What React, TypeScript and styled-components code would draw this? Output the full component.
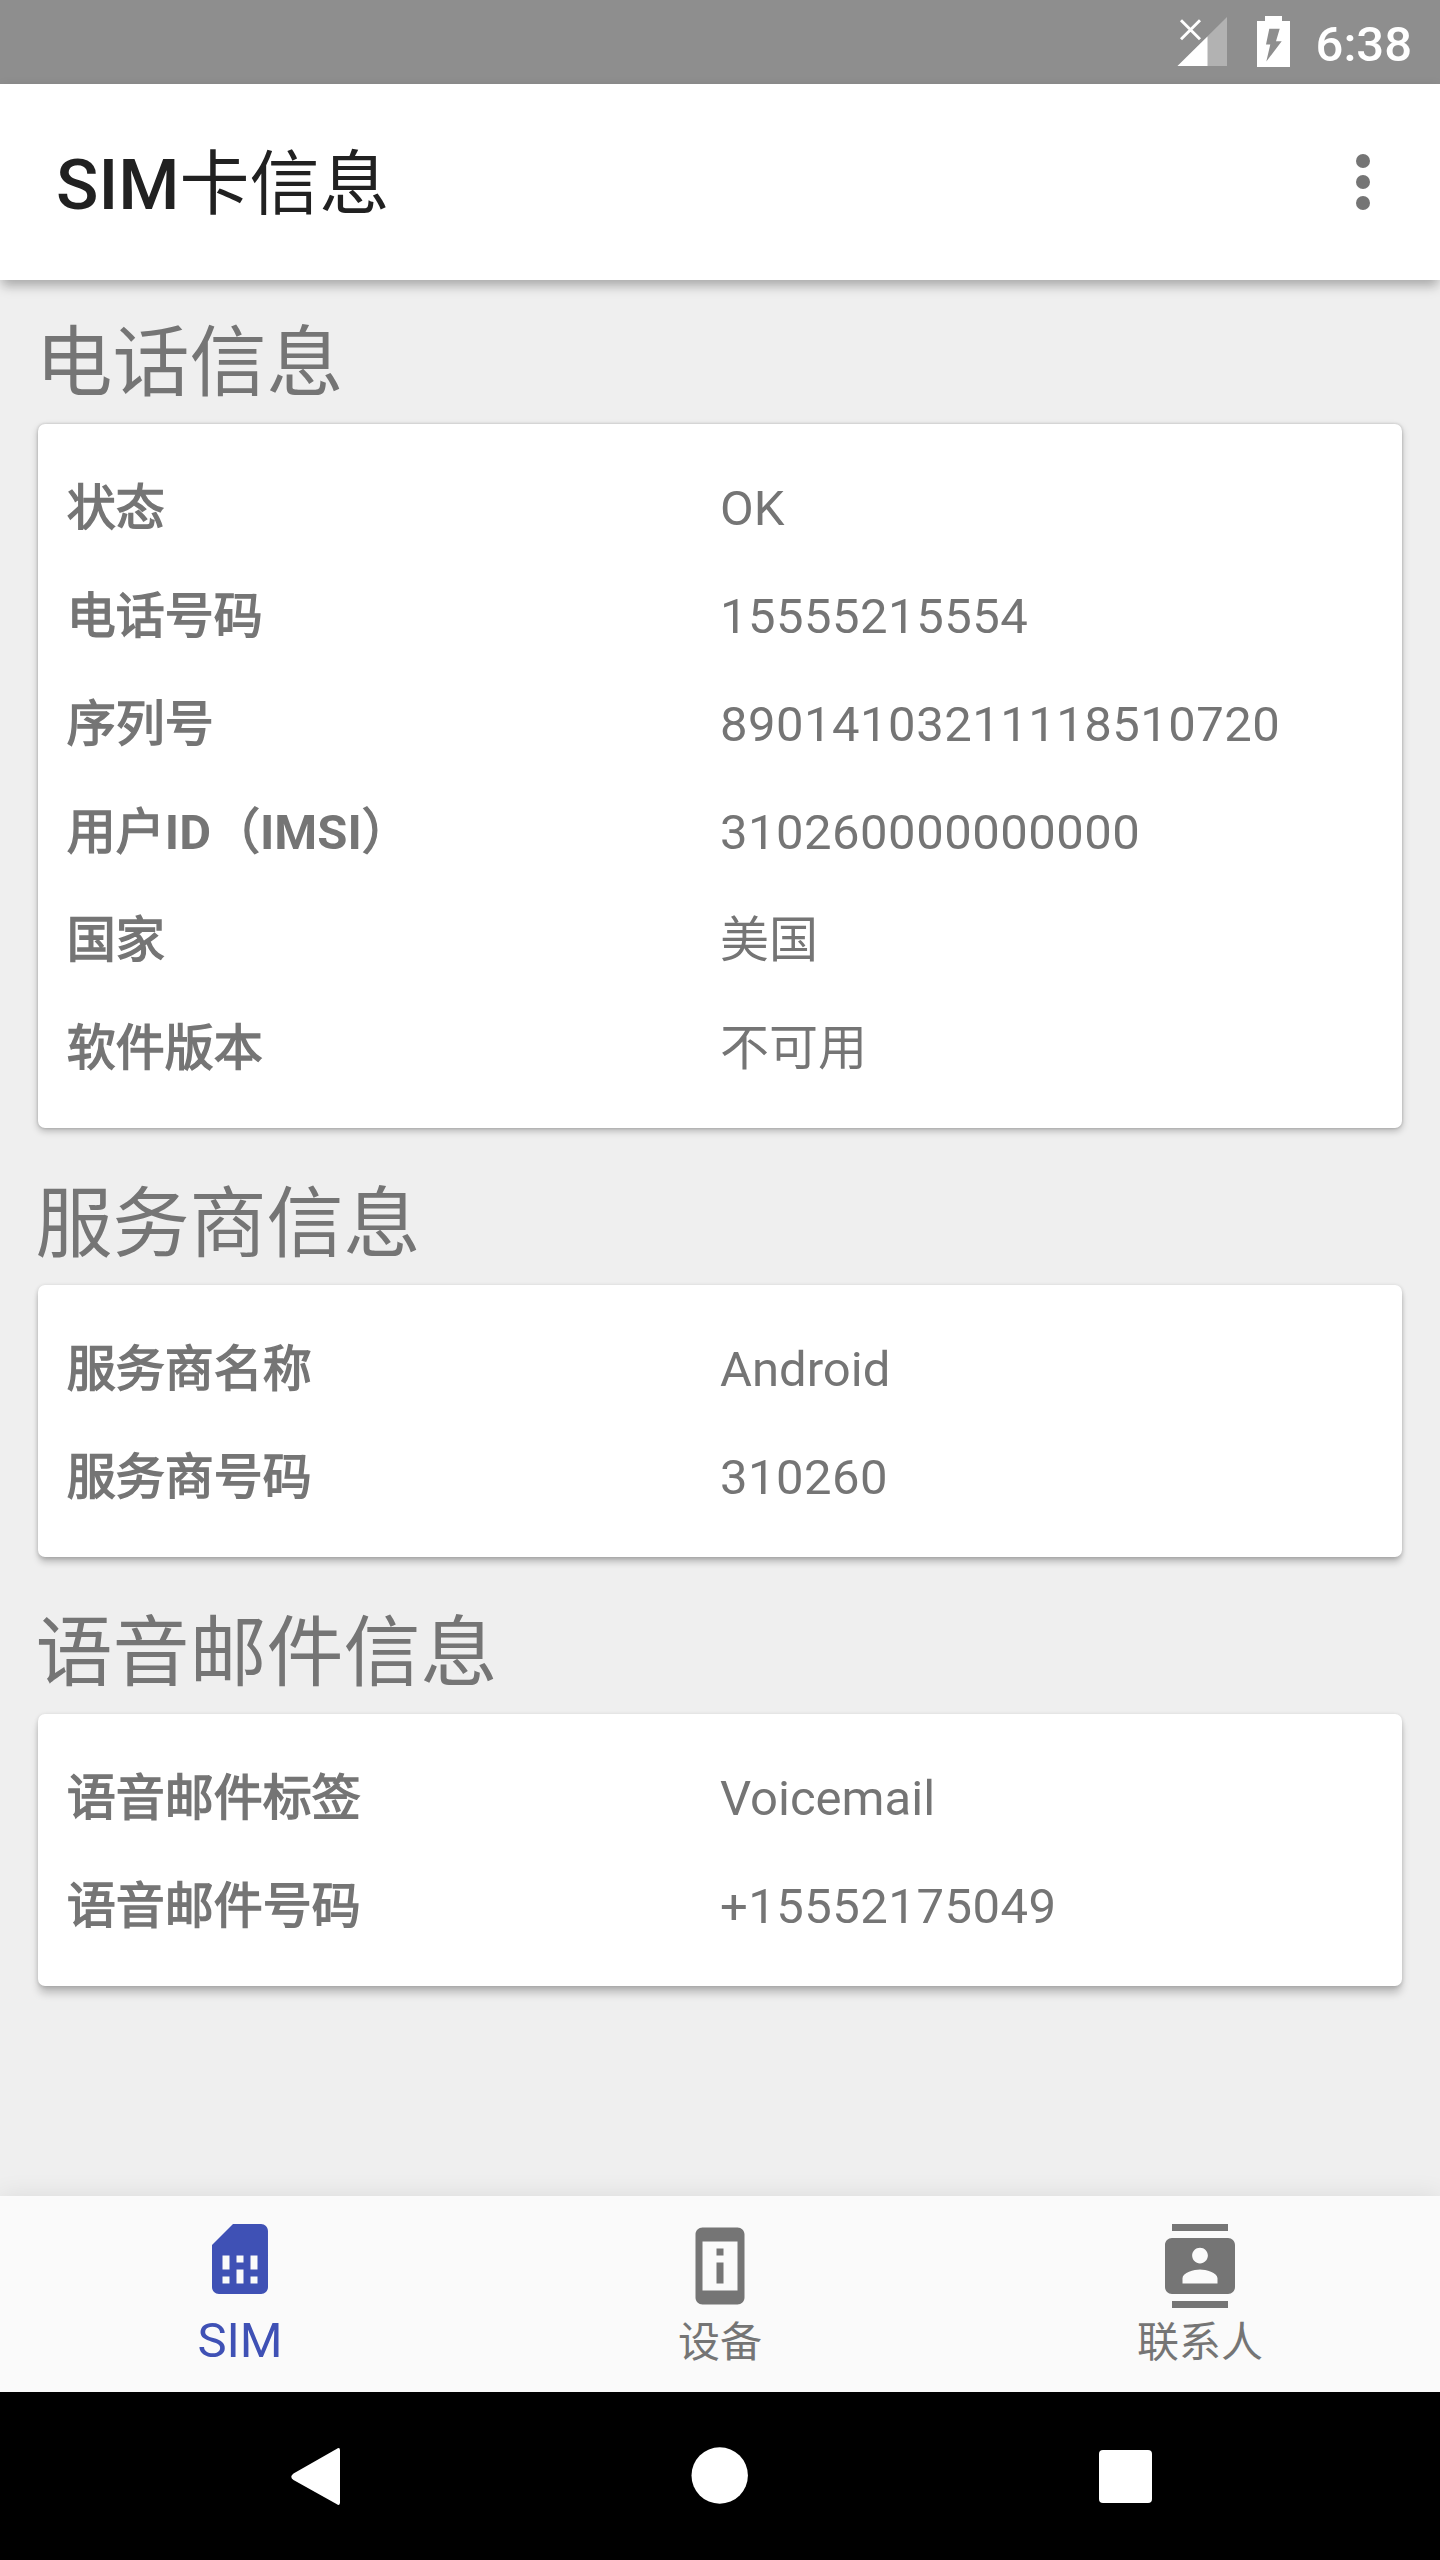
import React from 'react';
import styled, { createGlobalStyle, css } from 'styled-components';

const GlobalStyle = createGlobalStyle`
  html, body { margin: 0; padding: 0; }
  body { background: #efefef; }
  *, *::before, *::after { box-sizing: border-box; }
`;

const Screen = styled.div`
  display: flex;
  flex-direction: column;
  width: 1440px;
  height: 2560px;
  overflow: hidden;
  background: #efefef;
  color: #757575;
  font-family: Roboto, 'Noto Sans CJK SC', sans-serif;
`;

const StatusBar = styled.div`
  display: flex;
  justify-content: flex-end;
  align-items: flex-start;
  height: 84px;
  padding-right: 28px;
  background: #8e8e8e;
`;

const StatusIcons = styled.svg`
  width: 125px;
  height: 84px;
  margin-right: 26px;
`;

const Clock = styled.span`
  color: #fff;
  font-size: 49px;
  font-weight: 500;
  line-height: 89px;
`;

const Toolbar = styled.header`
  display: flex;
  justify-content: space-between;
  align-items: center;
  height: 196px;
  flex: none;
  padding: 0 35px 0 56px;
  background: #fff;
  box-shadow: 0 8px 11px -2px rgba(0, 0, 0, 0.26), 0 2px 12px rgba(0, 0, 0, 0.06);
`;

const Title = styled.h1`
  margin: 0;
  padding-top: 6px;
  color: #212121;
  font-size: 70px;
  font-weight: 500;
  line-height: 80px;
`;

const Regular = styled.span`
  font-weight: 400;
`;

const Icon = styled.svg`
  display: block;
  width: 84px;
  height: 84px;
  fill: currentColor;
`;

const Content = styled.main`
  flex: 1;
  padding: 0 38px;
`;

const Section = styled.section<{ $first?: boolean }>`
  padding-top: ${(p) => (p.$first ? 0 : 13)}px;
`;

const Heading = styled.h2`
  height: 144px;
  margin: 0 0 0 -2.5px;
  padding-top: 19px;
  font-size: 77px;
  font-weight: 400;
  line-height: 130px;
`;

const shadows = [
  '0 3px 7px rgba(0, 0, 0, 0.25), 0 0 3px rgba(0, 0, 0, 0.2)',
  '0 6px 7px -1px rgba(0, 0, 0, 0.22), 0 1px 4px rgba(0, 0, 0, 0.18)',
  '0 8px 8px -1px rgba(0, 0, 0, 0.22), 0 1px 4px rgba(0, 0, 0, 0.16)',
];

const Card = styled.dl<{ $depth: number }>`
  margin: 0;
  padding: 28px;
  border-radius: 7px;
  background: #fff;
  box-shadow: ${(p) => shadows[p.$depth]};
`;

const Row = styled.div`
  display: grid;
  grid-template-columns: 1fr 1fr;
  height: 108px;
  padding-top: 5px;
  font-size: 49px;
  line-height: 103px;
`;

const Label = styled.dt`
  margin: 0;
  padding-left: 0.8px;
  font-weight: 700;
  white-space: nowrap;
`;

const Han = styled.span`
  font-weight: 400;
  -webkit-text-stroke: 1.5px currentColor;
`;

const Value = styled.dd<{ $numeric: boolean }>`
  margin: 0;
  white-space: nowrap;
  letter-spacing: ${(p) => (p.$numeric ? '0.48px' : '0')};
`;

const BottomNav = styled.nav`
  display: grid;
  grid-template-columns: repeat(3, 1fr);
  flex: none;
  height: 196px;
  background: #fafafa;
  box-shadow: 0 0 24px rgba(0, 0, 0, 0.09);
`;

const Tab = styled.div<{ $active?: boolean }>`
  display: flex;
  flex-direction: column;
  align-items: center;
  padding-top: 28px;
  color: #757575;
  font-size: 42px;
  line-height: 60px;
  ${(p) =>
    p.$active &&
    css`
      padding-top: 21px;
      color: #3f51b5;
      font-size: 49px;
    `}
`;

const TabLabel = styled.span<{ $active?: boolean }>`
  margin-top: ${(p) => (p.$active ? 10 : 5)}px;
`;

const SystemNav = styled.div`
  display: flex;
  justify-content: center;
  gap: 344px;
  flex: none;
  height: 168px;
  padding-top: 50px;
  background: #000;
`;

const SystemIcon = styled.svg`
  width: 60px;
  height: 70px;
  fill: #fff;
`;

const sections = [
  {
    title: '电话信息',
    rows: [
      ['状态', 'OK'],
      ['电话号码', '15555215554'],
      ['序列号', '89014103211118510720'],
      ['用户ID（IMSI）', '310260000000000'],
      ['国家', '美国'],
      ['软件版本', '不可用'],
    ],
  },
  {
    title: '服务商信息',
    rows: [
      ['服务商名称', 'Android'],
      ['服务商号码', '310260'],
    ],
  },
  {
    title: '语音邮件信息',
    rows: [
      ['语音邮件标签', 'Voicemail'],
      ['语音邮件号码', '+15552175049'],
    ],
  },
];

const tabs = [
  {
    label: 'SIM',
    path: 'M19.99 4c0-1.1-.89-2-1.99-2h-8L4 8v12c0 1.1.9 2 2 2h12.01c1.1 0 1.99-.9 1.99-2l-.01-16zM9 19H7v-2h2v2zm8 0h-2v-2h2v2zm-8-4H7v-4h2v4zm4 4h-2v-4h2v4zm0-6h-2v-2h2v2zm4 2h-2v-4h2v4z',
  },
  {
    label: '设备',
    path: 'M13 7h-2v2h2V7zm0 4h-2v6h2v-6zm4-9.99L7 1c-1.1 0-2 .9-2 2v18c0 1.1.9 2 2 2h10c1.1 0 2-.9 2-2V3c0-1.1-.9-1.99-2-1.99zM17 19H7V5h10v14z',
  },
  {
    label: '联系人',
    path: 'M20 0H4v2h16V0zM4 24h16v-2H4v2zM20 4H4c-1.1 0-2 .9-2 2v12c0 1.1.9 2 2 2h16c1.1 0 2-.9 2-2V6c0-1.1-.9-2-2-2zm-8 2.75c1.24 0 2.25 1.01 2.25 2.25s-1.01 2.25-2.25 2.25S9.75 10.24 9.75 9 10.76 6.75 12 6.75zM17 17H7v-1.5c0-1.67 3.33-2.5 5-2.5s5 .83 5 2.5V17z',
  },
];

// Latin runs use the bold face; Han runs thicken the regular face.
const renderLabel = (text: string) =>
  text
    .split(/([A-Z]+)/)
    .filter(Boolean)
    .map((run, i) => (/^[A-Z]/.test(run) ? run : <Han key={i}>{run}</Han>));

export default function App() {
  return (
    <>
      <GlobalStyle />
      <Screen>
        <StatusBar>
          <StatusIcons viewBox="0 0 125 84">
            <path d="M62 17V66H12.5Z" fill="#b2b2b2" />
            <path d="M42.5 36.5V66H12.5Z" fill="#fff" />
            <path d="M16 20.3L35 39.3M35 20.3L16 39.3" stroke="#fff" strokeWidth="2.9" fill="none" />
            <path
              d="M92 21H100V16H117V21H125V67H92ZM104.3 28.7L101 44.5H105.3L101.3 61.5L116.7 41.3H111L114.7 28.7Z"
              fill="#fff"
              fillRule="evenodd"
            />
          </StatusIcons>
          <Clock>6:38</Clock>
        </StatusBar>
        <Toolbar>
          <Title>
            SIM<Regular>卡信息</Regular>
          </Title>
          <Icon viewBox="0 0 24 24">
            <circle cx="12" cy="6" r="2" />
            <circle cx="12" cy="12" r="2" />
            <circle cx="12" cy="18" r="2" />
          </Icon>
        </Toolbar>
        <Content>
          {sections.map((section, i) => (
            <Section key={section.title} $first={i === 0}>
              <Heading>{section.title}</Heading>
              <Card $depth={i}>
                {section.rows.map(([label, value]) => (
                  <Row key={label}>
                    <Label>{renderLabel(label)}</Label>
                    <Value $numeric={/\d/.test(value)}>{value}</Value>
                  </Row>
                ))}
              </Card>
            </Section>
          ))}
        </Content>
        <BottomNav>
          {tabs.map((tab, i) => (
            <Tab key={tab.label} $active={i === 0}>
              <Icon viewBox="0 0 24 24">
                <path d={tab.path} />
              </Icon>
              <TabLabel $active={i === 0}>{tab.label}</TabLabel>
            </Tab>
          ))}
        </BottomNav>
        <SystemNav>
          <SystemIcon viewBox="0 0 60 70">
            <path d="M54 8.5V60.5Q54 64.5 50.5 62L7.5 38Q3 34.8 7.5 31.5L50.5 7Q54 4.5 54 8.5Z" />
          </SystemIcon>
          <SystemIcon viewBox="0 0 60 70">
            <circle cx="29.7" cy="33.5" r="28.2" />
          </SystemIcon>
          <SystemIcon viewBox="0 0 60 70">
            <rect x="5" y="8" width="53" height="53" rx="4" />
          </SystemIcon>
        </SystemNav>
      </Screen>
    </>
  );
}
